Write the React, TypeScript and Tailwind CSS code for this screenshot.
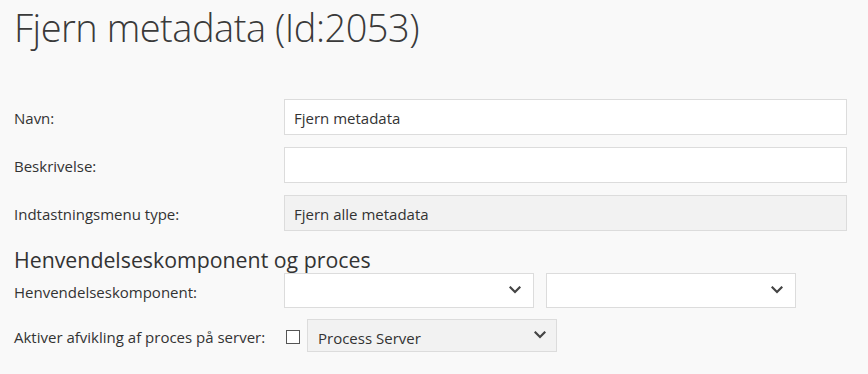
import React from "react";

const Chevron = () => (
  <svg width="12" height="8" viewBox="0 0 12 8" className="shrink-0">
    <polyline points="1.5,1.5 6,6 10.5,1.5" fill="none" stroke="#444" strokeWidth="2.2" strokeLinecap="square" />
  </svg>
);

const Label = ({ children, w = "w-[270px]" }: { children: React.ReactNode; w?: string }) => (
  <div className={`${w} shrink-0 pt-[3px] text-[15px] text-[#333]`}>{children}</div>
);

export default function App() {
  return (
    <div
      className="w-[868px] h-[374px] bg-[#f9f9f9] pl-[14px] text-[#333] overflow-hidden"
      style={{ fontFamily: '"Open Sans", "Noto Sans", sans-serif' }}
    >
      <h1 className="pt-[3px] text-[38px] leading-[48px] font-light text-[#3a3a3a] tracking-[-0.5px]">
        Fjern metadata (Id:2053)
      </h1>
      <div className="mt-[48px] flex flex-col gap-[12px]">
        <div className="flex items-center">
          <Label>Navn:</Label>
          <div className="w-[563px] h-[36px] bg-white border border-[#dcdcdc] flex items-center px-[9px] pt-[2px] text-[15px]">
            Fjern metadata
          </div>
        </div>
        <div className="flex items-center">
          <Label>Beskrivelse:</Label>
          <div className="w-[563px] h-[36px] bg-white border border-[#dcdcdc]" />
        </div>
        <div className="flex items-center">
          <Label>Indtastningsmenu type:</Label>
          <div className="w-[563px] h-[36px] bg-[#f2f2f2] border border-[#dcdcdc] flex items-center px-[9px] pt-[2px] text-[15px]">
            Fjern alle metadata
          </div>
        </div>
      </div>
      <h2 className="mt-[16px] text-[21.3px] leading-[26px] text-[#333]">Henvendelseskomponent og proces</h2>
      <div className="flex items-center">
        <Label>Henvendelseskomponent:</Label>
        <div className="flex gap-[12px]">
          <div className="w-[250px] h-[35px] bg-white border border-[#dcdcdc] flex items-center justify-end pr-[12px] pb-[2px]">
            <Chevron />
          </div>
          <div className="w-[250px] h-[35px] bg-white border border-[#dcdcdc] flex items-center justify-end pr-[12px] pb-[2px]">
            <Chevron />
          </div>
        </div>
      </div>
      <div className="mt-[11px] flex items-center">
        <Label w="w-[272px]">Aktiver afvikling af proces på server:</Label>
        <div className="w-[14px] h-[14px] bg-white border border-[#555] mt-[2px]" />
        <div className="ml-[7px] w-[250px] h-[33px] bg-[#f2f2f2] border border-[#dcdcdc] flex items-center justify-between pl-[10px] pr-[10px] text-[15px]">
          <span className="pt-[5px]">Process Server</span>
          <div className="pb-[2px]">
            <Chevron />
          </div>
        </div>
      </div>
    </div>
  );
}
